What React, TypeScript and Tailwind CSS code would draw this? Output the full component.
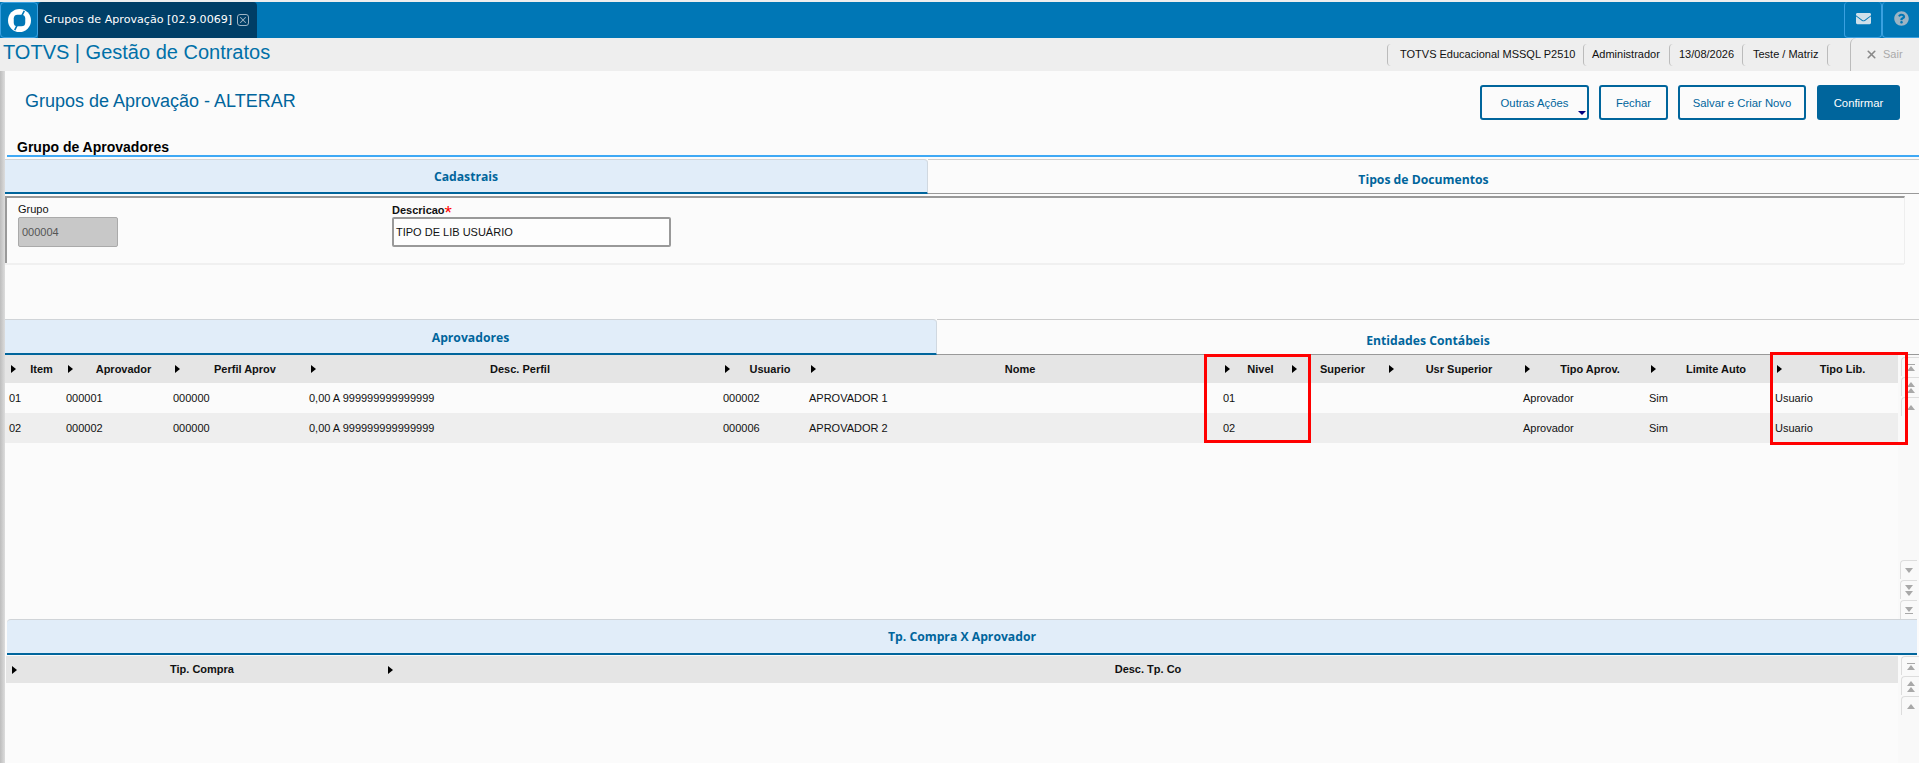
import React from 'react';
import { FaEnvelope, FaQuestionCircle } from 'react-icons/fa';
import { X } from 'lucide-react';

const approverCols = [
  { label: 'Item', width: 'w-[57px]' },
  { label: 'Aprovador', width: 'w-[107px]' },
  { label: 'Perfil Aprov', width: 'w-[136px]' },
  { label: 'Desc. Perfil', width: 'w-[414px]' },
  { label: 'Usuario', width: 'w-[86px]' },
  { label: 'Nome', width: 'w-[414px]' },
  { label: 'Nivel', width: 'w-[67px]' },
  { label: 'Superior', width: 'w-[97px]' },
  { label: 'Usr Superior', width: 'w-[136px]' },
  { label: 'Tipo Aprov.', width: 'w-[126px]' },
  { label: 'Limite Auto', width: 'w-[126px]' },
  { label: 'Tipo Lib.', width: 'flex-1' },
];

const approverRows = [
  ['01', '000001', '000000', '0,00 A 999999999999999', '000002', 'APROVADOR 1', '01', '', '', 'Aprovador', 'Sim', 'Usuario'],
  ['02', '000002', '000000', '0,00 A 999999999999999', '000006', 'APROVADOR 2', '02', '', '', 'Aprovador', 'Sim', 'Usuario'],
];

const HeaderCell = ({ label, width }: { label: string; width: string }) => (
  <div className={`${width} flex items-center h-full`}>
    <span className="w-4 shrink-0 pl-[6px]">
      <span className="block w-0 h-0 border-y-[4px] border-y-transparent border-l-[5px] border-l-black" />
    </span>
    <span className="flex-1 text-center font-bold text-[11px] text-[#111] whitespace-nowrap">{label}</span>
  </div>
);

const Tab = ({ label, active, width }: { label: string; active?: boolean; width: string }) => (
  <div
    className={
      active
        ? `${width} h-full flex items-center justify-center pt-[3px] bg-[#e1edf9] border-b-[2px] border-b-[#00659c] border-t border-t-[#d0d4d8] border-r border-r-[#d0d8e0] rounded-tr-[4px]`
        : `${width} h-full flex items-center justify-center pt-[8px] border-b border-b-[#999999] border-t border-t-[#cccccc]`
    }
  >
    <span className="font-['Open_Sans',sans-serif] font-bold text-[12.2px] text-[#00659c]">{label}</span>
  </div>
);

const UpArrow = () => <span className="block w-0 h-0 border-x-[4px] border-x-transparent border-b-[5px] border-b-[#a8a8a8]" />;
const DownArrow = () => <span className="block w-0 h-0 border-x-[4px] border-x-transparent border-t-[5px] border-t-[#a8a8a8]" />;
const Bar = () => <span className="block w-[8px] h-px bg-[#a8a8a8]" />;

const ScrollButton = ({ children }: { children: React.ReactNode }) => (
  <div className="h-[19px] border-l border-t border-[#dddddd] rounded-tl-[4px] flex flex-col items-center justify-center gap-px">
    {children}
  </div>
);

const UpButtons = () => (
  <div className="flex flex-col gap-px pl-[3px]">
    <ScrollButton><Bar /><UpArrow /></ScrollButton>
    <ScrollButton><UpArrow /><UpArrow /></ScrollButton>
    <ScrollButton><UpArrow /></ScrollButton>
  </div>
);

const DownButtons = () => (
  <div className="flex flex-col gap-px pl-[2px] pr-[2px]">
    <ScrollButton><DownArrow /></ScrollButton>
    <ScrollButton><DownArrow /><DownArrow /></ScrollButton>
    <ScrollButton><DownArrow /><Bar /></ScrollButton>
  </div>
);

const ActionButton = ({ label, width, children }: { label: string; width: string; children?: React.ReactNode }) => (
  <div className={`${width} relative h-[35px] flex items-center justify-center pt-[1px] border-2 border-[#00659c] rounded-[3px] text-[11.3px] text-[#00659c]`}>
    {label}
    {children}
  </div>
);

const App: React.FC = () => {
  return (
    <div className="w-[1919px] h-[763px] overflow-hidden flex flex-col bg-[#fbfbfb] font-['Liberation_Sans',Arial,sans-serif] text-[#111]">
      {/* Top bar */}
      <div className="h-[2px] bg-[#eeeeee]" />
      <div className="h-[36px] bg-[#0077b6] flex items-stretch">
        <div className="w-[38px] flex items-center justify-center border border-[#3aa0e0] rounded-[4px]">
          <svg width="23" height="23" viewBox="0 0 24 24">
            <circle cx="12" cy="12" r="12" fill="#ffffff" />
            <rect x="6" y="6" width="12" height="12" rx="4" fill="#0077b6" />
            <path d="M17 2 L14.5 7 M7 22 L9.5 17" stroke="#0077b6" strokeWidth="1.6" />
          </svg>
        </div>
        <div className="w-[219px] bg-[#003e66] rounded-t-[4px] flex items-center pl-[6px] gap-[5px]">
          <span className="font-['DejaVu_Sans',sans-serif] text-[11.1px] text-white whitespace-nowrap">Grupos de Aprovação [02.9.0069]</span>
          <span className="w-[12px] h-[12px] border border-[#9fb4c4] rounded-[3px] flex items-center justify-center">
            <X size={10} color="#9fb4c4" strokeWidth={2.5} />
          </span>
        </div>
        <div className="flex-1" />
        <div className="w-[38px] flex items-center justify-center border border-[#3aa0e0] border-t-0 rounded-[4px] pb-[2px]">
          <FaEnvelope size={15} color="#d0e0ea" />
        </div>
        <div className="w-[37px] flex items-center justify-center border border-r-0 border-[#3aa0e0] border-t-0 rounded-l-[4px] pb-[2px]">
          <FaQuestionCircle size={15} color="#9db4c4" />
        </div>
      </div>

      {/* System info bar */}
      <div className="h-[33px] bg-[#eeeeee] flex items-center justify-between">
        <span className="pl-[3px] pb-[5px] text-[20px] leading-none text-[#0070a8]">TOTVS | Gestão de Contratos</span>
        <div className="flex items-center h-full text-[11px]">
          <div className="h-[22px] w-[196px] border-l border-[#bbbbbb] rounded-l-[4px] flex items-center pl-[12px] whitespace-nowrap">TOTVS Educacional MSSQL P2510</div>
          <div className="h-[22px] w-[86px] border-l border-[#bbbbbb] rounded-l-[4px] flex items-center pl-[8px]">Administrador</div>
          <div className="h-[22px] w-[73px] border-l border-[#bbbbbb] rounded-l-[4px] flex items-center pl-[9px]">13/08/2026</div>
          <div className="h-[22px] w-[85px] border-l border-[#bbbbbb] rounded-l-[4px] flex items-center pl-[10px]">Teste / Matriz</div>
          <div className="h-[22px] w-[23px] border-l border-[#bbbbbb] rounded-l-[4px]" />
          <div className="h-full w-[69px] border-l border-[#bbbbbb] rounded-tl-[6px] flex items-center pl-[14px] gap-[4px] text-[#aaaaaa]">
            <X size={13} color="#888888" strokeWidth={3} />
            <span className="pl-[1px]">Sair</span>
          </div>
        </div>
      </div>

      <div className="flex-1 flex min-h-0">
        <div className="w-[5px] bg-gradient-to-r from-[#bdbdbd] to-[#dddddd]" />
        <div className="flex-1 flex flex-col min-w-0">
          {/* Page header */}
          <div className="h-[84px] relative flex flex-col">
            <div className="flex justify-between pt-[14px] pr-[19px]">
              <h1 className="pl-[20px] pt-[4px] text-[18px] leading-[24px] text-[#00659c]">Grupos de Aprovação - ALTERAR</h1>
              <div className="flex gap-[10px]">
                <ActionButton label="Outras Ações" width="w-[109px]">
                  <span className="absolute right-[1px] bottom-[3px] w-0 h-0 border-x-[4px] border-x-transparent border-t-[4px] border-t-[#000080]" />
                </ActionButton>
                <ActionButton label="Fechar" width="w-[69px]" />
                <ActionButton label="Salvar e Criar Novo" width="w-[128px]" />
                <div className="w-[83px] h-[35px] ml-[1px] flex items-center justify-center pt-[1px] bg-[#00659c] rounded-[3px] text-[11.3px] text-white">Confirmar</div>
              </div>
            </div>
            <div className="mt-auto pl-[12px] font-bold text-[14px] leading-[15px] text-black">Grupo de Aprovadores</div>
          </div>
          <div className="ml-[2px] h-[2px] bg-[#3fa9f5]" />
          <div className="h-[2px]" />

          {/* Cadastrais */}
          <div className="h-[35px] flex">
            <Tab label="Cadastrais" active width="w-[923px]" />
            <Tab label="Tipos de Documentos" width="flex-1" />
          </div>
          <div className="h-[68px] mt-[2px] mr-[14px] border-l-2 border-t-2 border-r border-[#999999] border-r-[#eeeeee] border-b-0 relative flex">
            <div className="absolute left-[-2px] right-0 bottom-[-1px] h-[2px] bg-[#f0f0f0]" />
            <div className="w-[385px] pl-[11px] pt-[5px]">
              <div className="text-[11px] leading-[13px] h-[13px] mb-[1px]">Grupo</div>
              <div className="w-[100px] h-[30px] bg-[#c8c8c8] border border-[#aaaaaa] rounded-[2px] flex items-center pl-[3px] text-[11px] text-[#555555]">000004</div>
            </div>
            <div className="pt-[5px]">
              <div className="text-[11px] leading-[13px] h-[13px] mb-[1px] pt-[1px] font-bold whitespace-nowrap">
                Descricao<span className="text-[#ff0000] text-[19px] leading-[10px] font-normal align-[-5px]">*</span>
              </div>
              <div className="w-[279px] h-[30px] bg-[#fdfdfd] border-2 border-[#999999] rounded-[2px] flex items-center pl-[2px] text-[11px]">TIPO DE LIB USUÁRIO</div>
            </div>
          </div>

          <div className="h-[55px]" />

          {/* Aprovadores */}
          <div className="h-[36px] flex">
            <Tab label="Aprovadores" active width="w-[932px]" />
            <Tab label="Entidades Contábeis" width="flex-1" />
          </div>
          <div className="h-[264px] flex">
            <div className="w-[1893px]">
              <div className="h-[28px] bg-[#e5e5e5] flex">
                {approverCols.map((col) => (
                  <HeaderCell key={col.label} label={col.label} width={col.width} />
                ))}
              </div>
              {approverRows.map((row, i) => (
                <div key={row[0]} className={i % 2 === 1 ? 'h-[30px] flex items-center bg-[#eeeeee]' : 'h-[30px] flex items-center'}>
                  {row.map((cell, j) => (
                    <div key={j} className={`${approverCols[j].width} pl-[4px] text-[11px] whitespace-nowrap`}>{cell}</div>
                  ))}
                </div>
              ))}
            </div>
            <div className="flex-1 flex flex-col justify-between pt-[2px] bg-[#f9f9f9]">
              <UpButtons />
              <DownButtons />
            </div>
          </div>

          {/* Tp. Compra X Aprovador */}
          <div className="h-[36px] mx-[2px] flex bg-[#e1edf9] items-center justify-center pt-[2px] border-t border-t-[#d0d4d8] border-b-[2px] border-b-[#00659c] rounded-tl-[4px]">
            <span className="font-['Open_Sans',sans-serif] font-bold text-[12.2px] text-[#00659c]">Tp. Compra X Aprovador</span>
          </div>
          <div className="flex-1 flex">
            <div className="w-[1892px] ml-px">
              <div className="h-[27px] mt-px bg-[#e5e5e5] flex">
                <HeaderCell label="Tip. Compra" width="w-[376px]" />
                <HeaderCell label="Desc. Tp. Co" width="flex-1" />
              </div>
            </div>
            <div className="flex-1 pt-[1px] bg-[#f9f9f9]">
              <UpButtons />
            </div>
          </div>
        </div>
      </div>

      {/* Red annotation boxes */}
      <div className="absolute left-[1204px] top-[354px] w-[107px] h-[89px] border-[3px] border-[#ff0000]" />
      <div className="absolute left-[1770px] top-[352px] w-[138px] h-[93px] border-[3px] border-[#ff0000]" />
    </div>
  );
};

export default App;
